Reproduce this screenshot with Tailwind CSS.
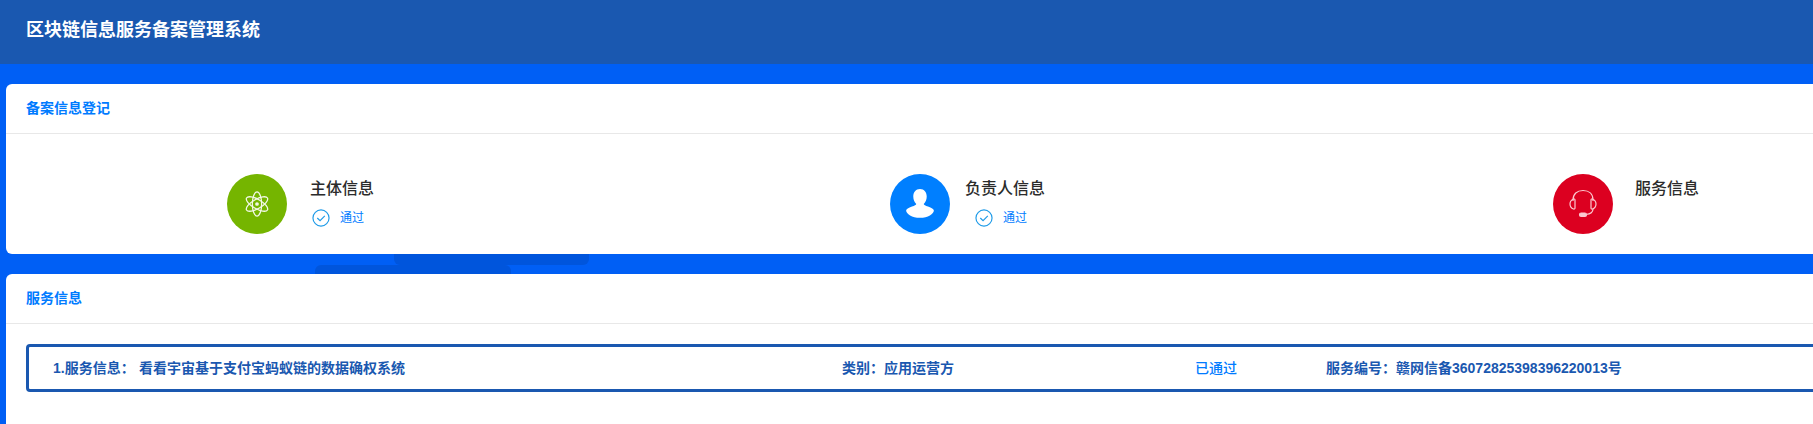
<!DOCTYPE html>
<html lang="zh">
<head>
<meta charset="utf-8">
<script src="https://cdn.jsdelivr.net/npm/@tailwindcss/browser@4"></script>
</head>
<body class="m-0">
<div class="relative h-[424px] w-full overflow-hidden bg-[#005ff5] font-['Liberation_Sans','Noto_Sans_CJK_SC',sans-serif]">
  <header class="flex h-16 items-start bg-[#1a58b0] pl-[26px] pt-[16px]">
    <h1 class="text-lg font-bold leading-[28px] text-white">区块链信息服务备案管理系统</h1>
  </header>

  <div class="absolute left-[394px] top-[254px] h-[11px] w-[195px] rounded-b-md bg-[#0055dc]"></div>
  <div class="absolute left-[315px] top-[265px] h-[9px] w-[196px] rounded-t-md bg-[#0055dc]"></div>

  <main class="relative ml-[6px] mt-5 flex w-[2000px] flex-col gap-5">
    <section class="h-[170px] rounded-md bg-white">
      <div class="flex h-[50px] items-center border-b border-[#e8e8e8] pb-[2px] pl-[20px]">
        <h2 class="text-sm font-bold text-[#007bff]">备案信息登记</h2>
      </div>
      <div class="grid grid-cols-[663px_663px_663px] pl-[221px] pt-10">
        <div class="flex">
          <div class="flex h-[60px] w-[60px] shrink-0 items-center justify-center rounded-full bg-[#75b500]">
            <svg class="h-[26px] w-[26px]" viewBox="0 0 28 28" fill="none" stroke="#f2f8e6" stroke-width="1.4">
              <ellipse cx="14" cy="14" rx="5" ry="13"/>
              <ellipse cx="14" cy="14" rx="5" ry="13" transform="rotate(60 14 14)"/>
              <ellipse cx="14" cy="14" rx="5" ry="13" transform="rotate(120 14 14)"/>
              <circle cx="14" cy="14" r="2" fill="#f2f8e6" stroke="none"/>
            </svg>
          </div>
          <div class="ml-[23px] pt-[3px]">
            <div class="text-base font-medium leading-6 text-[#2b2b2b]">主体信息</div>
            <div class="ml-[2px] mt-2 flex items-center">
              <svg class="h-[18px] w-[18px]" viewBox="0 0 17 17" fill="none" stroke="#1e9be8" stroke-width="1.1">
                <circle cx="8.5" cy="8.5" r="7.6"/>
                <path d="M5 8.5l2.6 2.6 4.5-4.6"/>
              </svg>
              <span class="ml-[10px] text-xs leading-4 text-[#007bff]">通过</span>
            </div>
          </div>
        </div>

        <div class="flex">
          <div class="flex h-[60px] w-[60px] shrink-0 items-center justify-center rounded-full bg-[#007fff]">
            <svg class="h-[32px] w-[32px]" viewBox="0 0 30 30" fill="#fff">
              <path d="M15 1c4 0 6.300 3 6.300 7 0 3-1.100 5.400-2.800 7 .3 1 1.500 1.600 4 2.300 3.300 1 5.500 2.500 5.500 3.700 0 3-5.500 7-13 7s-13-4-13-7c0-1.200 2.200-2.700 5.500-3.700 2.500-.7 3.700-1.300 4-2.300-1.700-1.600-2.800-4-2.800-7 0-4 2.300-7 6.300-7z"/>
            </svg>
          </div>
          <div class="ml-[15px] pt-[3px]">
            <div class="text-base font-medium leading-6 text-[#2b2b2b]">负责人信息</div>
            <div class="ml-[10px] mt-2 flex items-center">
              <svg class="h-[18px] w-[18px]" viewBox="0 0 17 17" fill="none" stroke="#1e9be8" stroke-width="1.1">
                <circle cx="8.5" cy="8.5" r="7.6"/>
                <path d="M5 8.5l2.6 2.6 4.5-4.6"/>
              </svg>
              <span class="ml-[10px] text-xs leading-4 text-[#007bff]">通过</span>
            </div>
          </div>
        </div>

        <div class="flex">
          <div class="flex h-[60px] w-[60px] shrink-0 items-center justify-center rounded-full bg-[#dc0020]">
            <svg class="h-[32px] w-[32px]" viewBox="0 0 32 32" fill="none" stroke="#fbc9d0" stroke-width="1.2">
              <path d="M6 13v-1C6 6 10 2.500 16 2.500S26 6 26 12v1"/>
              <path d="M6.500 11C4 12 3 14 3 16s1 4 3.500 5c1 .3 1.500-.3 1.500-1v-8c0-.7-.5-1.300-1.500-1z"/>
              <path d="M25.500 11C28 12 29 14 29 16s-1 4-3.500 5c-1 .3-1.500-.3-1.500-1v-8c0-.7.5-1.300 1.500-1z"/>
              <path d="M26 21c0 3-2.500 5-7 5.500"/>
              <rect x="12.500" y="25" width="7" height="3.500" rx="1.700" fill="#fbc9d0"/>
            </svg>
          </div>
          <div class="ml-[22px] pt-[3px]">
            <div class="text-base font-medium leading-6 text-[#2b2b2b]">服务信息</div>
          </div>
        </div>
      </div>
    </section>

    <section class="h-[200px] rounded-md bg-white">
      <div class="flex h-[50px] items-center border-b border-[#e8e8e8] pb-[2px] pl-[20px]">
        <h2 class="text-sm font-bold text-[#007bff]">服务信息</h2>
      </div>
      <div class="pl-[20px] pt-5">
        <div class="flex h-12 w-[1900px] items-center rounded border-[3px] border-[#1a58b0] pl-[24px] text-sm font-bold text-[#1a58b0]">
          <div class="flex w-[789px] shrink-0">
            <span class="w-[86px] shrink-0">1.服务信息：</span>
            <span>看看宇宙基于支付宝蚂蚁链的数据确权系统</span>
          </div>
          <div class="w-[353px] shrink-0">类别：应用运营方</div>
          <div class="w-[131px] shrink-0 font-medium text-[#007bff]">已通过</div>
          <div class="shrink-0">服务编号：赣网信备36072825398396220013号</div>
        </div>
      </div>
    </section>
  </main>
</div>
</body>
</html>
